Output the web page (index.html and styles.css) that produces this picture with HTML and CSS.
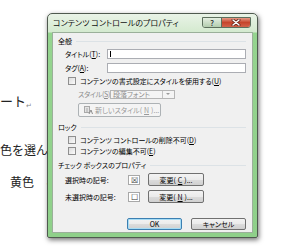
FILE: index.html
```html
<!DOCTYPE html>
<html lang="ja">
<head>
    <meta charset="UTF-8">
    <title>コンテンツ コントロールのプロパティ</title>
    <link rel="stylesheet" href="styles.css">
</head>
<body>
    <div class="doc">
        <p class="line first">ート<span class="ret">↵</span></p>
        <p class="line second">色を選んで</p>
        <p class="line third">黄色　ネ</p>
    </div>

    <div class="dialog">
        <div class="titlebar">
            <span class="title">コンテンツ コントロールのプロパティ</span>
            <div class="caption">
                <span class="help">?</span>
                <span class="close">
                    <svg width="10" height="7" viewBox="0 0 10 7">
                        <path d="M2 1 L8 6 M8 1 L2 6" stroke="#6b2a1e" stroke-width="3" stroke-linecap="round"/>
                        <path d="M2 1 L8 6 M8 1 L2 6" stroke="#fff" stroke-width="1.4" stroke-linecap="round"/>
                    </svg>
                </span>
            </div>
        </div>

        <div class="panel">
            <div class="group">全般</div>
            <div class="row field">
                <span class="label">タイトル(<u>T</u>):</span>
                <span class="input"><span class="caret"></span></span>
            </div>
            <div class="row field gap4">
                <span class="label">タグ(<u>A</u>):</span>
                <span class="input"></span>
            </div>
            <div class="row check">
                <span class="box"></span>コンテンツの書式設定にスタイルを使用する(<u>U</u>)
            </div>
            <div class="row style disabled">
                <span class="label">スタイル(<u>S</u>):</span>
                <span class="combo"><span class="combo-text">段落フォント</span><span class="arrow"></span></span>
            </div>
            <div class="row newstyle">
                <span class="btn off">
                    <svg width="9" height="9" viewBox="0 0 9 9">
                        <rect x="0.5" y="0.5" width="5" height="6" fill="#e4e4e4" stroke="#a9a9a9"/>
                        <path d="M2 3h2M2 5h2" stroke="#a9a9a9"/>
                        <path d="M5 8 L7 4 L8.5 8" fill="none" stroke="#8c8c8c"/>
                    </svg>
                    新しいスタイル(<u>N</u>)...
                </span>
            </div>

            <div class="group lock">ロック</div>
            <div class="row check">
                <span class="box"></span>コンテンツ コントロールの削除不可(<u>D</u>)
            </div>
            <div class="row check tight">
                <span class="box"></span>コンテンツの編集不可(<u>E</u>)
            </div>

            <div class="group props">チェック ボックスのプロパティ</div>
            <div class="row symbol">
                <span class="label">選択時の記号:</span>
                <span class="sym">☒</span>
                <span class="btn">変更(<u>C</u>)...</span>
            </div>
            <div class="row symbol gap4">
                <span class="label">未選択時の記号:</span>
                <span class="sym">☐</span>
                <span class="btn">変更(<u>N</u>)...</span>
            </div>

            <div class="footer">
                <span class="btn wide default">OK</span>
                <span class="btn wide">キャンセル</span>
            </div>
        </div>
    </div>
</body>
</html>
```

FILE: styles.css
```css
body {
    margin: 0;
    background: #ffffff;
    font-family: "Noto Sans CJK JP", "Noto Sans", sans-serif;
    overflow: hidden;
}

/* the Word document behind the dialog */
.doc {
    padding-top: 93px;
    color: #222;
}
.line {
    margin: 0;
    font-size: 12px;
    line-height: 16px;
    white-space: nowrap;
}
.line.first { font-size: 13px; }
.line.second { margin-top: 29px; }
.line.third { margin-top: 16px; padding-left: 10px; }
.ret {
    font-size: 7px;
    color: #888;
    vertical-align: -2px;
}

/* dialog window */
.dialog {
    position: absolute;
    left: 47px;
    top: 13px;
    width: 211px;
    height: 225px;
    box-sizing: border-box;
    border: 1px solid #4f5a4f;
    border-radius: 5px 5px 2px 2px;
    padding: 0 4px 4px 4px;
    background: linear-gradient(to bottom, #e9f3e7 0, #d4eacf 18px, #95d48f 19px, #8fd08a 100%);
    box-shadow: 1px 2px 5px rgba(0, 0, 0, 0.55);
    display: flex;
    flex-direction: column;
    font-feature-settings: "palt";
}
.titlebar {
    height: 18px;
    display: flex;
    justify-content: space-between;
    align-items: flex-start;
}
.title {
    font-size: 8px;
    line-height: 9px;
    margin-top: 4px;
    padding-left: 1px;
    color: #111;
    white-space: nowrap;
}
.caption {
    display: flex;
    margin-top: 3px;
    margin-right: 2px;
    border: 1px solid #5d6f5d;
    border-radius: 0 0 3px 3px;
    overflow: hidden;
}
.help {
    width: 18px;
    height: 9px;
    background: linear-gradient(#e4eee1, #b3cdae);
    border-right: 1px solid #5d6f5d;
    font-size: 8px;
    line-height: 9px;
    font-weight: bold;
    text-align: center;
    color: #3b4a3a;
    text-shadow: 0 0 1px #fff;
}
.close {
    width: 28px;
    height: 9px;
    background: linear-gradient(#e59a86, #c6452c 50%, #d2634b);
    display: flex;
    align-items: center;
    justify-content: center;
}

.panel {
    flex: 1;
    background: #f0f0f0;
    border: 1px solid #9bb09a;
    padding: 3px 6px 0 5px;
    font-size: 7px;
    color: #000;
    display: flex;
    flex-direction: column;
}
.panel u { text-decoration-thickness: 0.5px; text-underline-offset: 1px; }

.group {
    height: 10px;
    line-height: 10px;
    display: flex;
    align-items: center;
    gap: 4px;
    white-space: nowrap;
}
.group::after {
    content: "";
    flex: 1;
    height: 1px;
    background: #dce2e6;
}
.group.lock { margin-top: 5px; }
.group.props { margin-top: 4px; }

.row {
    display: flex;
    align-items: center;
    white-space: nowrap;
    margin-top: 3px;
}
.row.gap4 { margin-top: 4px; }
.row.tight { margin-top: 1px; }
.label { flex-shrink: 0; }

.field { height: 10px; padding-left: 7px; }
.field .label { width: 42px; }
.input {
    width: 139px;
    height: 10px;
    box-sizing: border-box;
    background: #fff;
    border: 1px solid #abadb3;
    display: flex;
    align-items: center;
    padding-left: 2px;
}
.caret {
    width: 1px;
    height: 6px;
    background: #000;
}

.check { height: 10px; padding-left: 10px; }
.box {
    width: 6px;
    height: 6px;
    border: 1px solid #8f8f8f;
    background: linear-gradient(135deg, #dcdcdc, #fbfbfb);
    margin-right: 4px;
    flex-shrink: 0;
}

.style { height: 10px; padding-left: 20px; color: #8d8d8d; }
.style .label { width: 32px; letter-spacing: -0.3px; }
.combo {
    width: 65px;
    height: 9px;
    box-sizing: border-box;
    border: 1px solid #b5b5b5;
    background: #f4f4f4;
    display: flex;
}
.combo-text { flex: 1; padding-left: 2px; line-height: 7px; }
.arrow {
    width: 11px;
    border-left: 1px solid #c2c2c2;
    position: relative;
}
.arrow::after {
    content: "";
    position: absolute;
    left: 3px;
    top: 2px;
    border: 2.5px solid transparent;
    border-top-color: #9a9a9a;
}

.newstyle { height: 14px; margin-top: 4px; padding-left: 20px; }

.btn {
    box-sizing: border-box;
    height: 13px;
    border: 1px solid #707070;
    border-radius: 2px;
    background: linear-gradient(#f3f3f3, #ebebeb 50%, #dcdcdc 51%, #d0d0d0);
    display: flex;
    align-items: center;
    justify-content: center;
    gap: 2px;
    color: #000;
}
.btn.off {
    width: 83px;
    height: 14px;
    border-color: #adb2b5;
    background: #f4f4f4;
    color: #9a9a9a;
    justify-content: flex-start;
    padding-left: 5px;
}

.symbol { height: 13px; padding-left: 7px; }
.symbol .label { width: 63px; }
.sym {
    width: 12px;
    height: 10px;
    box-sizing: border-box;
    border: 1px solid #a8a8a8;
    background: #fff;
    font-size: 8px;
    line-height: 8px;
    text-align: center;
    color: #333;
    margin-right: 8px;
    flex-shrink: 0;
}
.symbol .btn { width: 56px; }

.footer {
    margin-top: 15px;
    display: flex;
    justify-content: flex-end;
    gap: 9px;
}
.btn.wide { width: 55px; height: 12px; }
.btn.default {
    border-color: #3c7fb1;
    box-shadow: inset 0 0 0 1px #a6dcf5;
}
```
